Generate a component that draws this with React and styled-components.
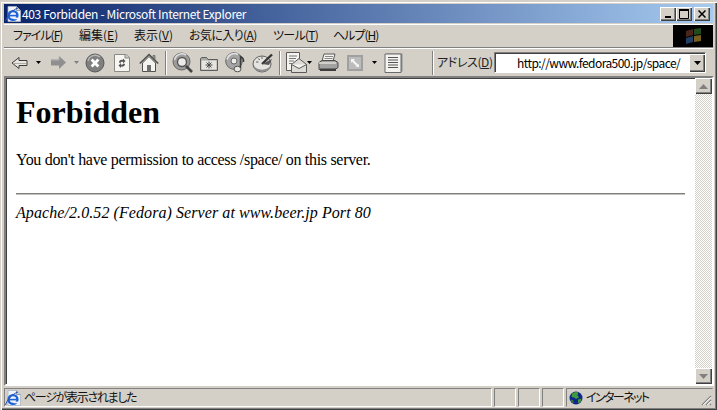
import React from "react";
import styled, { createGlobalStyle } from "styled-components";

const GlobalStyle = createGlobalStyle`
  html, body {
    margin: 0;
    padding: 0;
    background: #d4d0c8;
    overflow: hidden;
  }
`;

const uiFont = `"Noto Sans CJK JP", "Liberation Sans", sans-serif`;

const IeLogo = ({ size = 16 }) => (
  <svg width={size} height={size} viewBox="0 0 16 16">
    <path d="M3 0.5H11.5L15.5 4.5V15.5H3Z" fill="#f2f4f8" stroke="#a8b4c8" strokeWidth="0.8" />
    <path d="M11.5 0.5V4.5H15.5" fill="#c8d0dc" stroke="#7e8ca4" strokeWidth="0.8" />
    <circle cx="8" cy="9.5" r="4.4" fill="none" stroke="#1c62d8" strokeWidth="2.4" />
    <path d="M3.5 9.6h9" stroke="#1c62d8" strokeWidth="1.6" />
    <path d="M8.5 12.4h6" stroke="#f2f4f8" strokeWidth="1.6" />
    <path d="M0.5 15C2 10 7 4 13 2" fill="none" stroke="#2a4ea8" strokeWidth="1" />
  </svg>
);

const BackIcon = () => (
  <svg width="17" height="14" viewBox="0 0 17 14">
    <path d="M1 7L8 1.5V4.5H16V9.5H8V12.5Z" fill="#e8e6e0" stroke="#3c3c3c" strokeWidth="1" />
    <path d="M3 7.5H15" stroke="#b0aca4" strokeWidth="1" />
  </svg>
);

const ForwardIcon = () => (
  <svg width="17" height="15" viewBox="0 0 17 15">
    <path d="M16 7.5L9 1V4.5H1V10.5H9V14Z" fill="#8f8f8f" />
    <path d="M9 2V5H2" fill="none" stroke="#b4b4b4" strokeWidth="1" />
  </svg>
);

const Caret = ({ color = "#000" }) => (
  <svg width="5" height="3" viewBox="0 0 5 3">
    <path d="M0 0H5L2.5 3Z" fill={color} />
  </svg>
);

const StopIcon = () => (
  <svg width="20" height="20" viewBox="0 0 20 20">
    <circle cx="10" cy="10" r="9" fill="#7f7f7f" stroke="#5a5a5a" strokeWidth="1" />
    <path d="M3 8A7.5 7.5 0 0 1 15 4" fill="none" stroke="#b8b8b8" strokeWidth="1.4" />
    <path d="M6.6 6.6L13.4 13.4M13.4 6.6L6.6 13.4" stroke="#fff" strokeWidth="2.8" />
  </svg>
);

const RefreshIcon = () => (
  <svg width="18" height="20" viewBox="0 0 18 20">
    <path d="M1.5 1.5H13L16.5 4.5V18.5H1.5Z" fill="#f6f5f1" stroke="#8a8a84" strokeWidth="1" />
    <path d="M12 1.5V5H16.5" fill="#c8c6c0" stroke="#8a8a84" strokeWidth="1" />
    <path d="M6 9.5C6 7.5 8 6.5 10 7V5.5L12.5 8L10 10.5V8.8C8.6 8.5 7.6 9 7.5 10Z" fill="#555" />
    <path d="M12 11C12 13 10 14 8 13.5V15L5.5 12.5L8 10V11.7C9.4 12 10.4 11.5 10.5 10.6Z" fill="#555" />
  </svg>
);

const HomeIcon = () => (
  <svg width="20" height="20" viewBox="0 0 20 20">
    <path d="M3.5 10V18.5H16.5V10L10 3.5Z" fill="#f4f3ef" stroke="#505050" strokeWidth="1" />
    <path d="M0.8 10.5L10 1.5L19.2 10.5" fill="none" stroke="#505050" strokeWidth="1.6" />
    <path d="M14 2.5H16V6.5L14 4.5Z" fill="#9a9a9a" stroke="#505050" strokeWidth="0.6" />
    <rect x="8" y="12" width="4" height="6.5" fill="#6e6e6e" />
  </svg>
);

const SearchIcon = () => (
  <svg width="22" height="22" viewBox="0 0 22 22">
    <circle cx="9.5" cy="9.5" r="8.5" fill="#9c9c9c" stroke="#666" strokeWidth="1" />
    <path d="M2.5 8A7.5 7.5 0 0 1 14 3" fill="none" stroke="#dedede" strokeWidth="1.6" />
    <circle cx="10" cy="10" r="4.5" fill="#ecebe7" stroke="#555" strokeWidth="1.4" />
    <path d="M14 14L20 20" stroke="#444" strokeWidth="2.6" />
  </svg>
);

const FavoritesIcon = () => (
  <svg width="20" height="18" viewBox="0 0 20 18">
    <path d="M1.5 4.5V16.5H18.5V5.5H9L7.5 3.5H3Z" fill="#a8a8a4" stroke="#5e5e5e" strokeWidth="1" />
    <path d="M2.5 6.5H17.5V15.5H2.5Z" fill="#e6e5e0" />
    <path d="M10 7.5V14.5M6.5 11H13.5M7.5 8.5L12.5 13.5M12.5 8.5L7.5 13.5" stroke="#4a4a4a" strokeWidth="1" />
  </svg>
);

const MediaIcon = () => (
  <svg width="21" height="21" viewBox="0 0 21 21">
    <circle cx="9" cy="9" r="8.3" fill="#a4a4a4" stroke="#666" strokeWidth="1" />
    <path d="M2 7.5A7.5 7.5 0 0 1 13 2.5" fill="none" stroke="#e2e2e2" strokeWidth="1.6" />
    <circle cx="9" cy="9" r="3" fill="#ecebe7" stroke="#666" strokeWidth="1" />
    <ellipse cx="12.5" cy="17" rx="3.5" ry="2.8" fill="#e8e7e3" stroke="#555" strokeWidth="1" />
    <path d="M15.5 16V4.5C17.5 5.5 19 7 18.5 10" fill="none" stroke="#3e3e3e" strokeWidth="1.5" />
  </svg>
);

const HistoryIcon = () => (
  <svg width="22" height="21" viewBox="0 0 22 21">
    <ellipse cx="10" cy="12" rx="9" ry="8" fill="#e4e3df" stroke="#606060" strokeWidth="1" />
    <path d="M2 13.5C4 19 16 19 18.5 13.5V15.5C16 21 4 21 2 15.5Z" fill="#8e8e8e" />
    <path d="M10 12L20 2.5" stroke="#333" strokeWidth="2.4" />
    <path d="M10 12L20 7L17 13Z" fill="#555" />
    <path d="M4 10H6.5M6 6.5L8 8M10 4.5V7" stroke="#666" strokeWidth="1" />
  </svg>
);

const MailIcon = () => (
  <svg width="21" height="21" viewBox="0 0 21 21">
    <path d="M0.5 0.5H13.5V18.5H0.5Z" fill="#f4f3ef" stroke="#5a5a5a" strokeWidth="1" />
    <path d="M3 4H11M3 6.5H10M3 9H8M3 11.5H6" stroke="#777" strokeWidth="1" />
    <path d="M5.5 12.5L13 6.5L20.5 12.5V20.5H5.5Z" fill="#dcdbd6" stroke="#5a5a5a" strokeWidth="1" />
    <path d="M5.5 12.5L13 16.5L20.5 12.5" fill="#f4f3ef" stroke="#5a5a5a" strokeWidth="1" />
  </svg>
);

const PrintIcon = () => (
  <svg width="21" height="19" viewBox="0 0 21 19">
    <path d="M6 1H17L15 8H4Z" fill="#f4f3ef" stroke="#5a5a5a" strokeWidth="1" />
    <path d="M7 3.5H15M6.5 5.5H14.5" stroke="#888" strokeWidth="1" />
    <path d="M1 9.5L4 7.5H17L20 9.5V14.5L17 16.5H1Z" fill="#a2a2a0" stroke="#4a4a4a" strokeWidth="1" />
    <path d="M1 10H18" stroke="#e4e3df" strokeWidth="1.4" />
    <path d="M2 15.5H18V18H2Z" fill="#3e3e3e" />
  </svg>
);

const EditIcon = () => (
  <svg width="16" height="16" viewBox="0 0 16 16">
    <rect width="16" height="16" fill="#a0a0a0" />
    <rect x="2" y="2" width="12" height="12" fill="#bcbcbc" />
    <path d="M4 4H8L6.8 5.2L11.5 9.9L9.9 11.5L5.2 6.8L4 8Z" fill="#f4f4f4" />
    <path d="M12 12H8.8L12 8.8Z" fill="#f4f4f4" />
  </svg>
);

const DiscussIcon = () => (
  <svg width="20" height="20" viewBox="0 0 20 20">
    <path d="M2.5 0.5H18.5V18.5H2.5Z" fill="#8f8f8c" />
    <path d="M1 1H17V19.5H1Z" fill="#f4f3ef" stroke="#6a6a6a" strokeWidth="1" />
    <path d="M4 4.5H14M4 7H14M4 9.5H14M4 12H14M4 14.5H14" stroke="#555" strokeWidth="1" />
  </svg>
);

const FlagLogo = () => (
  <svg width="17" height="16" viewBox="0 0 17 16" opacity="0.7">
    <path d="M1 3L8 1V7L1 9Z" fill="#6e3426" />
    <path d="M9 1L16 0V6L9 7Z" fill="#2f6a2c" />
    <path d="M1 10L8 8V14L1 16Z" fill="#2f5a92" />
    <path d="M9 8L16 7V13L9 14Z" fill="#a8862a" />
  </svg>
);

const GlobeIcon = () => (
  <svg width="14" height="14" viewBox="0 0 14 14">
    <circle cx="7" cy="7" r="6.5" fill="#10248c" />
    <path d="M3 2.5C5 1 8 0.5 9.5 1.5L8.5 4L10 6.5L7 8L5 6.5L2.5 6Z" fill="#3f9a3a" />
    <path d="M9 8.5L12.5 7.5L11.5 11L9 12.5Z" fill="#3f9a3a" />
    <path d="M1.5 8.5L4 9L5 12L3 11.5Z" fill="#2f7e30" />
  </svg>
);

const ScrollArrow = ({ down }) => (
  <svg width="9" height="5" viewBox="0 0 9 5">
    <path d={down ? "M0 0H9L4.5 5Z" : "M0 5H9L4.5 0Z"} fill="#808080" />
  </svg>
);

const Page = styled.div`
  width: 717px;
  height: 410px;
  box-sizing: border-box;
  display: flex;
  flex-direction: column;
  padding: 1px 4px 3px 4px;
  background: #d4d0c8;
  border-top: 1px solid #d4d0c8;
  box-shadow: inset 1px 1px 0 #d4d0c8, inset 2px 2px 0 #fff, inset -1px -1px 0 #404040, inset -2px -2px 0 #808080;
  font-family: ${uiFont};
  font-feature-settings: "palt";
  font-size: 12px;
  color: #000;
`;

const TitleBar = styled.div`
  height: 19px;
  margin-top: 2px;
  flex: none;
  display: flex;
  align-items: center;
  padding: 0 3px 0 1px;
  background: linear-gradient(90deg, #0a246a, #a6caf0);
  color: #fff;
`;

const TitleText = styled.span`
  flex: 1;
  padding-left: 1px;
  font-size: 12px;
  letter-spacing: -0.35px;
  white-space: nowrap;
`;

const WinButton = styled.button`
  width: 16px;
  height: 14px;
  padding: 0;
  margin-left: ${(p) => (p.$gap ? "2px" : "0")};
  display: flex;
  align-items: center;
  justify-content: center;
  background: #d4d0c8;
  border: none;
  box-shadow: inset 1px 1px 0 #fff, inset -1px -1px 0 #404040, inset -2px -2px 0 #808080;
`;

const MenuRow = styled.div`
  height: 24px;
  margin-top: 1px;
  flex: none;
  display: flex;
  border-top: 1px solid #fff;
  border-bottom: 1px solid #808080;
  box-sizing: border-box;
`;

const MenuItems = styled.div`
  flex: 1;
  display: flex;
  align-items: center;
  padding: 0 0 3px 9px;
`;

const MenuItem = styled.span`
  flex: none;
  width: ${(p) => p.$w}px;
  font-size: 12px;
  letter-spacing: ${(p) => p.$ls || 0}px;
  white-space: nowrap;
  color: #111;
`;

const Key = styled.u`
  text-underline-offset: 1px;
`;

const LogoBox = styled.div`
  width: 40px;
  background: #000;
  display: flex;
  align-items: center;
  justify-content: center;
`;

const ToolRow = styled.div`
  height: 28px;
  flex: none;
  display: flex;
  align-items: center;
  box-sizing: border-box;
  border-top: 1px solid #fff;
`;

const Tool = styled.div`
  flex: none;
  width: ${(p) => p.$w}px;
  margin-left: ${(p) => p.$ml || 0}px;
  display: flex;
  align-items: center;
  justify-content: center;
`;

const Divider = styled.div`
  flex: none;
  width: 1px;
  height: 24px;
  margin-left: ${(p) => p.$ml}px;
  background: #808080;
  border-right: 1px solid #fff;
`;

const AddressLabel = styled.span`
  flex: none;
  width: 57px;
  margin: 0 0 3px 3px;
  font-size: 12px;
  letter-spacing: -0.4px;
  color: #222;
  white-space: nowrap;
`;

const Combo = styled.div`
  flex: none;
  width: 212px;
  height: 21px;
  box-sizing: border-box;
  display: flex;
  background: #fff;
  border: 1px solid #808080;
  border-right-color: #fff;
  border-bottom-color: #fff;
  box-shadow: inset 1px 1px 0 #404040;
  padding: 1px 0 0 1px;
`;

const ComboText = styled.span`
  flex: 1;
  min-width: 0;
  padding-left: 21px;
  line-height: 18px;
  font-size: 12px;
  letter-spacing: -0.56px;
  white-space: nowrap;
`;

const ComboButton = styled.div`
  flex: none;
  width: 16px;
  display: flex;
  align-items: center;
  justify-content: center;
  background: #d4d0c8;
  box-shadow: inset 1px 1px 0 #fff, inset -1px -1px 0 #404040, inset -2px -2px 0 #808080;
`;

const ContentFrame = styled.div`
  flex: 1;
  min-height: 0;
  display: flex;
  border: 2px solid;
  border-color: #808080 #fff #fff #808080;
  box-shadow: inset 1px 1px 0 #404040;
  margin-right: -1px;
  background: #fff;
`;

const Document = styled.div`
  flex: 1;
  padding: 16px 10px 0 10px;
  font-family: "Liberation Serif", "Times New Roman", serif;
  font-feature-settings: normal;
  color: #000;
`;

const Heading = styled.h1`
  margin: 0;
  font-size: 32px;
  line-height: 37px;
  font-weight: bold;
`;

const Message = styled.p`
  margin: 20px 0 0;
  font-size: 16px;
  line-height: 18px;
  letter-spacing: -0.31px;
`;

const Rule = styled.hr`
  margin: 24px 0 0;
  height: 0;
  border: none;
  border-top: 1px solid #808080;
  border-bottom: 1px solid #c4c1ba;
`;

const Signature = styled.address`
  margin-top: 9px;
  font-size: 16px;
  line-height: 18px;
  font-style: italic;
  letter-spacing: 0.08px;
`;

const ScrollBar = styled.div`
  flex: none;
  width: 17px;
  display: flex;
  flex-direction: column;
  background: repeating-conic-gradient(#d4d0c8 0 25%, #fff 0 50%) 0 0 / 2px 2px;
`;

const ScrollButton = styled.div`
  flex: none;
  height: 16px;
  display: flex;
  align-items: center;
  justify-content: center;
  margin-top: ${(p) => (p.$bottom ? "auto" : "0")};
  background: #d4d0c8;
  box-shadow: inset 1px 1px 0 #fff, inset -1px -1px 0 #404040, inset -2px -2px 0 #808080;
`;

const StatusBar = styled.div`
  height: 21px;
  flex: none;
  display: flex;
  align-items: stretch;
  padding-top: 2px;
  box-sizing: border-box;
  font-size: 12px;
`;

const StatusPane = styled.div`
  flex: ${(p) => (p.$w ? "none" : "1")};
  width: ${(p) => (p.$w ? `${p.$w}px` : "auto")};
  margin-left: ${(p) => (p.$w ? "2px" : "0")};
  box-sizing: border-box;
  display: flex;
  align-items: center;
  gap: 3px;
  padding-left: ${(p) => (p.$pad ? `${p.$pad}px` : "0")};
  border: 1px solid;
  border-color: #808080 #fff #fff #808080;
  white-space: nowrap;
  color: #111;
`;

const StatusLabel = styled.span`
  margin-top: -3px;
  letter-spacing: ${(p) => p.$ls || 0}px;
`;

const Grip = styled.svg`
  position: absolute;
  right: 0;
  bottom: 0;
`;

const GripPane = styled(StatusPane)`
  position: relative;
  border-color: transparent;
  border-left-color: #808080;
  border-top-color: #808080;
`;

const menus = [
  { label: "ファイル", key: "F", w: 66, ls: -1 },
  { label: "編集", key: "E", w: 55 },
  { label: "表示", key: "V", w: 55 },
  { label: "お気に入り", key: "A", w: 84, ls: -0.6 },
  { label: "ツール", key: "T", w: 60, ls: -0.7 },
  { label: "ヘルプ", key: "H", w: 50, ls: -1 },
];

export default function App() {
  return (
    <>
      <GlobalStyle />
      <Page>
        <TitleBar>
          <IeLogo />
          <TitleText>403 Forbidden - Microsoft Internet Explorer</TitleText>
          <WinButton>
            <svg width="8" height="8" viewBox="0 0 8 8"><rect x="1" y="6" width="6" height="2" /></svg>
          </WinButton>
          <WinButton>
            <svg width="10" height="10" viewBox="0 0 10 10"><path d="M0.5 1.5H9.5V9.5H0.5Z" fill="none" stroke="#000" /><rect y="0" width="10" height="2" /></svg>
          </WinButton>
          <WinButton $gap>
            <svg width="8" height="8" viewBox="0 0 8 8"><path d="M0.5 0.5L7.5 7.5M7.5 0.5L0.5 7.5" stroke="#000" strokeWidth="1.5" /></svg>
          </WinButton>
        </TitleBar>

        <MenuRow>
          <MenuItems>
            {menus.map((m) => (
              <MenuItem key={m.key} $w={m.w} $ls={m.ls}>
                {m.label}(<Key>{m.key}</Key>)
              </MenuItem>
            ))}
          </MenuItems>
          <LogoBox>
            <FlagLogo />
          </LogoBox>
        </MenuRow>

        <ToolRow>
          <Tool $w={17} $ml={7}><BackIcon /></Tool>
          <Tool $w={5} $ml={8}><Caret /></Tool>
          <Tool $w={17} $ml={9}><ForwardIcon /></Tool>
          <Tool $w={5} $ml={7}><Caret color="#808080" /></Tool>
          <Tool $w={20} $ml={6}><StopIcon /></Tool>
          <Tool $w={18} $ml={8}><RefreshIcon /></Tool>
          <Tool $w={20} $ml={8}><HomeIcon /></Tool>
          <Divider $ml={6} />
          <Tool $w={22} $ml={5}><SearchIcon /></Tool>
          <Tool $w={20} $ml={5}><FavoritesIcon /></Tool>
          <Tool $w={21} $ml={6}><MediaIcon /></Tool>
          <Tool $w={22} $ml={6}><HistoryIcon /></Tool>
          <Divider $ml={5} />
          <Tool $w={21} $ml={5}><MailIcon /></Tool>
          <Tool $w={5} $ml={0}><Caret /></Tool>
          <Tool $w={21} $ml={6}><PrintIcon /></Tool>
          <Tool $w={16} $ml={8}><EditIcon /></Tool>
          <Tool $w={5} $ml={9}><Caret /></Tool>
          <Tool $w={20} $ml={7}><DiscussIcon /></Tool>
          <Divider $ml={28} />
          <AddressLabel>アドレス(<Key>D</Key>)</AddressLabel>
          <Combo>
            <ComboText>http://www.fedora500.jp/space/</ComboText>
            <ComboButton>
              <svg width="7" height="4" viewBox="0 0 7 4"><path d="M0 0H7L3.5 4Z" /></svg>
            </ComboButton>
          </Combo>
        </ToolRow>

        <ContentFrame>
          <Document>
            <Heading>Forbidden</Heading>
            <Message>You don't have permission to access /space/ on this server.</Message>
            <Rule />
            <Signature>Apache/2.0.52 (Fedora) Server at www.beer.jp Port 80</Signature>
          </Document>
          <ScrollBar>
            <ScrollButton><ScrollArrow /></ScrollButton>
            <ScrollButton $bottom><ScrollArrow down /></ScrollButton>
          </ScrollBar>
        </ContentFrame>

        <StatusBar>
          <StatusPane>
            <IeLogo />
            <StatusLabel $ls={-1.3}>ページが表示されました</StatusLabel>
          </StatusPane>
          <StatusPane $w={22} />
          <StatusPane $w={22} />
          <StatusPane $w={22} />
          <GripPane $w={147} $pad={2}>
            <GlobeIcon />
            <StatusLabel $ls={-1.6}>インターネット</StatusLabel>
            <Grip width="12" height="12" viewBox="0 0 12 12">
              <path d="M11 2L2 11M11 6L6 11M11 10L10 11" stroke="#808080" strokeWidth="1.2" />
              <path d="M11 3.2L3.2 11M11 7.2L7.2 11" stroke="#fff" strokeWidth="1" />
            </Grip>
          </GripPane>
        </StatusBar>
      </Page>
    </>
  );
}
